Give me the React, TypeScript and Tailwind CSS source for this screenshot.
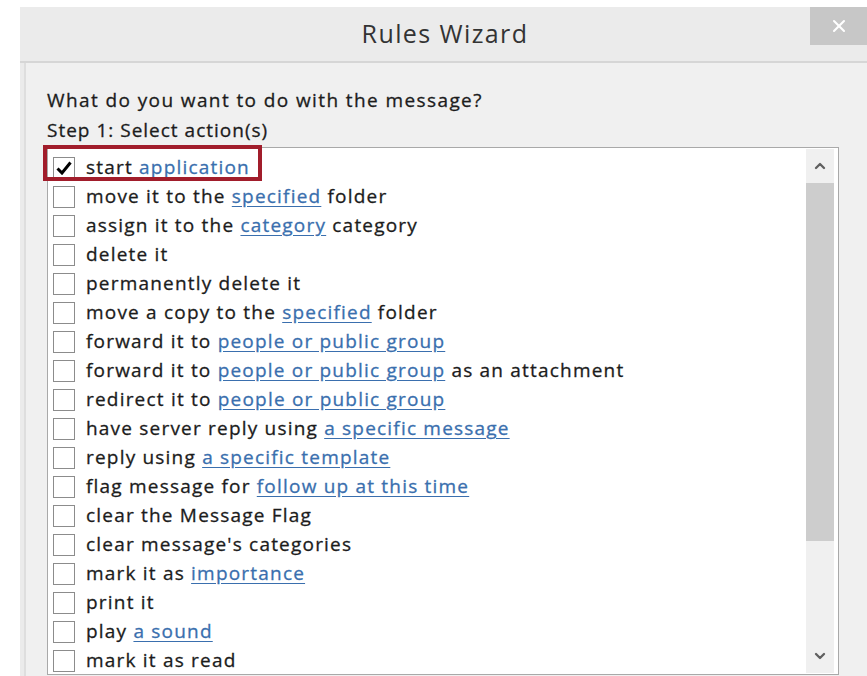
import { ChevronDown, ChevronUp, X } from 'lucide-react';

type Part = { text: string; link?: boolean };

const ACTIONS: Part[][] = [
  [{ text: 'start ' }, { text: 'application', link: true }],
  [{ text: 'move it to the ' }, { text: 'specified', link: true }, { text: ' folder' }],
  [{ text: 'assign it to the ' }, { text: 'category', link: true }, { text: ' category' }],
  [{ text: 'delete it' }],
  [{ text: 'permanently delete it' }],
  [{ text: 'move a copy to the ' }, { text: 'specified', link: true }, { text: ' folder' }],
  [{ text: 'forward it to ' }, { text: 'people or public group', link: true }],
  [{ text: 'forward it to ' }, { text: 'people or public group', link: true }, { text: ' as an attachment' }],
  [{ text: 'redirect it to ' }, { text: 'people or public group', link: true }],
  [{ text: 'have server reply using ' }, { text: 'a specific message', link: true }],
  [{ text: 'reply using ' }, { text: 'a specific template', link: true }],
  [{ text: 'flag message for ' }, { text: 'follow up at this time', link: true }],
  [{ text: 'clear the Message Flag' }],
  [{ text: "clear message's categories" }],
  [{ text: 'mark it as ' }, { text: 'importance', link: true }],
  [{ text: 'print it' }],
  [{ text: 'play ' }, { text: 'a sound', link: true }],
  [{ text: 'mark it as read' }],
];

function ActionRow({ parts, checked }: { parts: Part[]; checked: boolean }) {
  return (
    <div className="flex items-center h-[29px] pl-[5px]">
      <span className="w-[22px] h-[22px] border border-[#8c8c8c] bg-white flex items-center justify-center shrink-0">
        {checked && (
          <svg width="16" height="14" viewBox="0 0 16 14" className="text-black">
            <path d="M1.5 7.5 L6 12 L14.5 1.5" fill="none" stroke="currentColor" strokeWidth="3" strokeLinejoin="miter" />
          </svg>
        )}
      </span>
      <span className="ml-[11px] whitespace-pre text-[19px] tracking-[1.2px] text-[#1c1c1c] [-webkit-text-stroke:0.3px_currentColor]">
        {parts.map((p, i) =>
          p.link ? (
            <span key={i} className="text-[#3a6fae] underline underline-offset-[3px] decoration-[#3a6fae]">
              {p.text}
            </span>
          ) : (
            <span key={i}>{p.text}</span>
          )
        )}
      </span>
    </div>
  );
}

export default function App() {
  return (
    <div
      className="w-[867px] h-[676px] bg-white pl-[20px] pt-[7px] overflow-hidden"
      style={{ fontFamily: '"Open Sans", "Noto Sans", sans-serif' }}
    >
      <div className="h-full bg-[#ebebeb] flex flex-col">
        {/* title bar */}
        <div className="h-[56px] grid grid-cols-[57px_1fr_57px] border-b-2 border-[#d6d6d6]">
          <div />
          <div className="flex items-center justify-center text-[25px] tracking-[1.4px] text-[#333333] pb-[1px] pl-[3px]">
            Rules Wizard
          </div>
          <div className="h-[38px] bg-[#c7c7c7] flex items-center justify-center">
            <X size={20} strokeWidth={2.5} className="text-white" />
          </div>
        </div>

        {/* wizard body */}
        <div className="flex-1 ml-[4px] border-l-2 border-[#dedede] bg-[#f0f0f0] pl-[21px] pr-[28px] pt-[22px]">
          <div className="text-[19px] tracking-[1.4px] text-[#1c1c1c] leading-[30px] [-webkit-text-stroke:0.3px_currentColor]">
            What do you want to do with the message?
          </div>
          <div className="text-[19px] tracking-[1px] text-[#1c1c1c] leading-[30px] [-webkit-text-stroke:0.3px_currentColor]">
            Step 1: Select action(s)
          </div>

          <div className="relative mt-[2px] h-[528px] border border-[#a9a9a9] bg-white flex">
            <div className="flex-1 pt-[5px] overflow-hidden">
              {ACTIONS.map((parts, i) => (
                <ActionRow key={i} parts={parts} checked={i === 0} />
              ))}
            </div>

            {/* scrollbar */}
            <div className="w-[28px] mr-[4px] my-[1px] bg-[#f0f0f0] flex flex-col">
              <div className="h-[34px] flex items-center justify-center">
                <ChevronUp size={16} strokeWidth={3.5} className="text-[#606060]" />
              </div>
              <div className="h-[358px] bg-[#cdcdcd]" />
              <div className="flex-1" />
              <div className="h-[34px] flex items-center justify-center">
                <ChevronDown size={16} strokeWidth={3.5} className="text-[#606060]" />
              </div>
            </div>

            {/* selected action highlight */}
            <div className="absolute left-[-5px] top-[-3px] w-[219px] h-[36px] border-4 border-[#a11d2b] pointer-events-none" />
          </div>
        </div>
      </div>
    </div>
  );
}
